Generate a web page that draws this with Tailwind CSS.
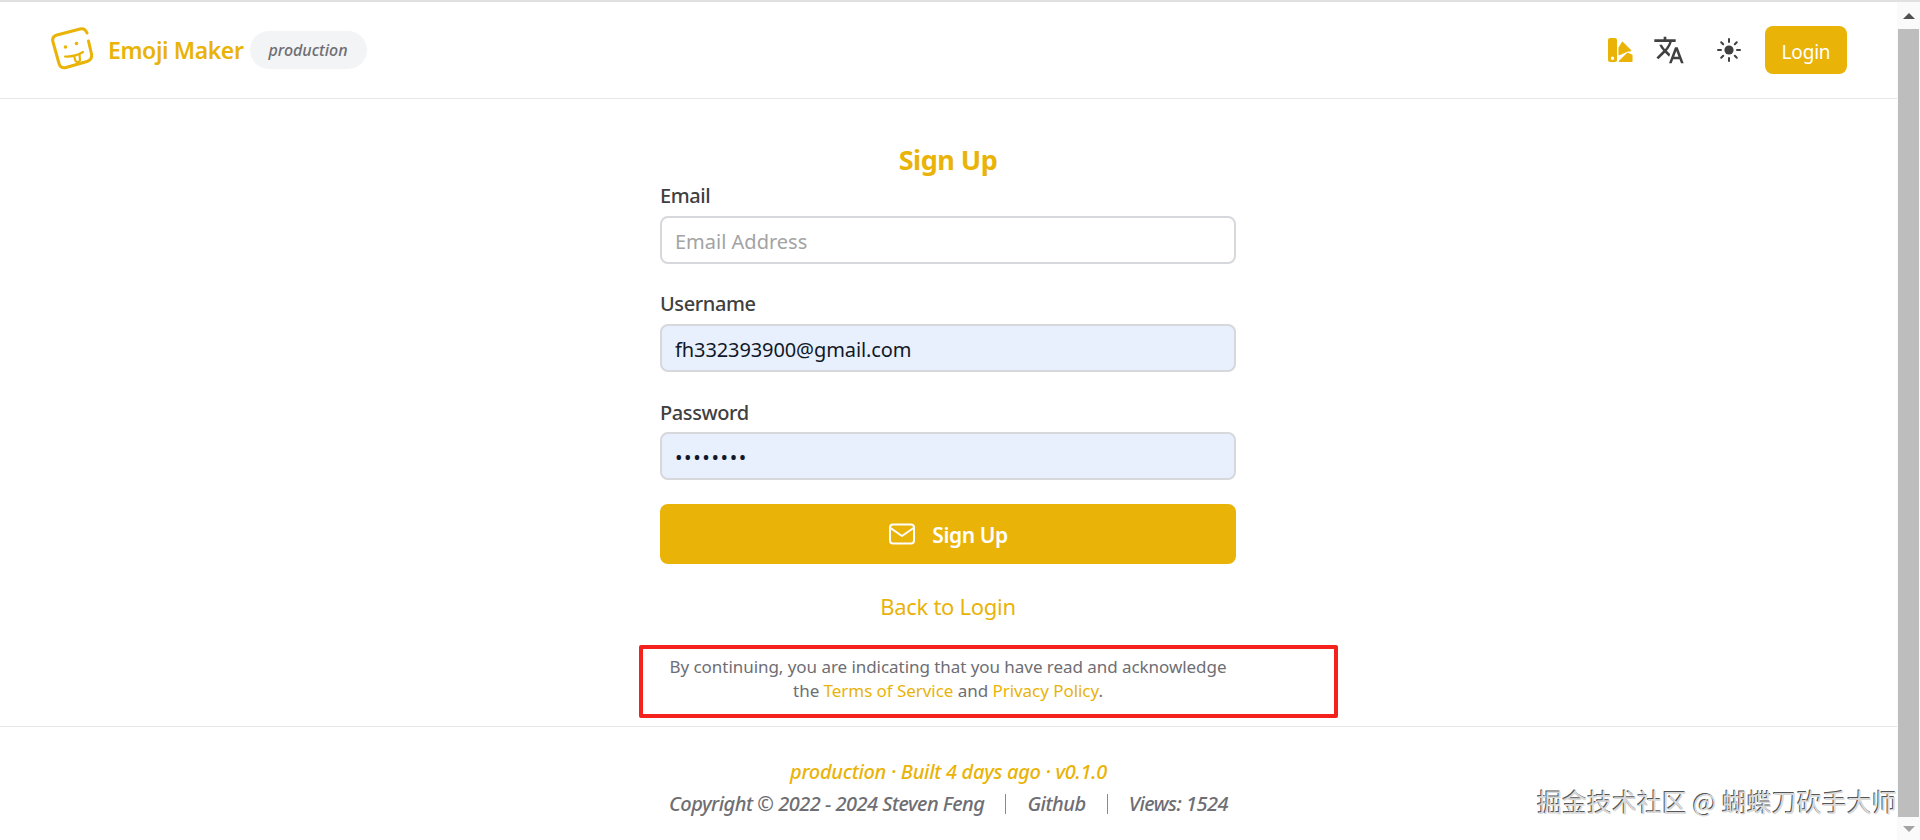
<!DOCTYPE html>
<html lang="en">
  <head>
    <meta charset="UTF-8" />
    <title>Emoji Maker</title>
    <script src="https://cdn.jsdelivr.net/npm/@tailwindcss/browser@4"></script>
  </head>
  <body class="h-[840px] overflow-hidden bg-white font-['Noto_Sans',sans-serif] text-[#404040]">
    <div class="h-[2px] bg-[#e0e0e0]"></div>
    <div class="flex h-[838px]">
      <div class="relative flex-1 min-w-0">
        <!-- header -->
        <header class="flex h-[97px] items-center justify-between border-b border-[#e5e7eb] pl-[50px] pr-[50px]">
          <div class="flex items-center">
            <svg class="h-[46px] w-[46px]" viewBox="0 0 46 46" fill="none" stroke="#e9b308" stroke-width="3" stroke-linecap="round" stroke-linejoin="round">
              <path d="M38.5 14 L41.5 27 Q42.5 33 37 34.5 L16 40.5 Q10.5 42 9 36.5 L3 15 Q1.5 9.5 7 8 L30 2 Q35 1 37 6" />
              <circle cx="15.5" cy="20" r="1.8" fill="#e9b308" stroke="none" />
              <circle cx="26.5" cy="16.5" r="1.8" fill="#e9b308" stroke="none" />
              <path d="M15 29.5 Q25 30 33 25" stroke-width="2.2" />
              <path d="M24 29 L25.5 34 Q28 36.5 30 33.5 L29.5 27.5" stroke-width="2.2" />
            </svg>
            <span class="mt-[1px] ml-[12px] text-[23px] font-semibold tracking-[-0.4px] text-[#e9b308]">Emoji Maker</span>
            <span class="ml-[6px] flex h-[38px] w-[117px] items-center justify-center rounded-full bg-[#f3f4f6] text-[16px] font-medium italic text-[#6e6e73]">production</span>
          </div>
          <div class="flex items-center">
            <svg class="h-[26px] w-[26px]" viewBox="0 0 26 26" fill="#e9b308">
              <path d="M3 1 H8 Q10 1 10 3 V23 Q10 25 8 25 H3 Q1 25 1 23 V3 Q1 1 3 1 Z M5.5 19.5 A1.7 1.7 0 1 0 5.5 22.9 A1.7 1.7 0 1 0 5.5 19.5 Z" fill-rule="evenodd" />
              <path d="M12.2 17.5 V11 L15.5 5.5 L23.5 13.5 L20 14 Z" stroke="#e9b308" stroke-width="1.5" stroke-linejoin="round" />
              <path d="M12.5 24.2 L20.5 16.5 L24.8 18.2 V24.2 Z" stroke="#e9b308" stroke-width="1.5" stroke-linejoin="round" />
            </svg>
            <svg class="ml-[20px] h-[32px] w-[32px]" viewBox="0 0 24 24" fill="#404040">
              <path d="M12.87 15.07l-2.54-2.51.03-.03c1.74-1.94 2.98-4.17 3.71-6.53H17V4h-7V2H8v2H1v1.99h11.17C11.5 7.92 10.44 9.75 9 11.35 8.07 10.32 7.3 9.19 6.69 8h-2c.73 1.63 1.73 3.17 2.98 4.56l-5.09 5.02L4 19l5-5 3.11 3.11.76-2.04zM18.5 10h-2L12 22h2l1.12-3h4.75L21 22h2l-4.5-12zm-2.62 7l1.62-4.33L19.12 17h-3.24z" />
            </svg>
            <svg class="ml-[31px] h-[26px] w-[26px]" viewBox="0 0 26 26" fill="#404040" stroke="#404040" stroke-width="2" stroke-linecap="round">
              <circle cx="13" cy="13" r="4.6" stroke="none" />
              <path d="M13 2v3M13 21v3M2 13h3M21 13h3M5.2 5.2l2 2M18.8 18.8l2 2M5.2 20.8l2-2M18.8 7.2l2-2" />
            </svg>
            <button class="ml-[23px] flex h-[48px] w-[82px] items-center justify-center rounded-lg bg-[#e9b308] pt-[4px] text-[19px] tracking-[-0.2px] text-white">Login</button>
          </div>
        </header>

        <!-- sign up form -->
        <main class="ml-[660px] flex w-[576px] flex-col">
          <h1 class="mt-[43px] text-center text-[27px] leading-[36px] font-bold tracking-[-0.5px] text-[#e9b308]">Sign Up</h1>
          <label class="mt-[4px] text-[20px] leading-[28px] font-medium tracking-[-0.4px]">Email</label>
          <input class="mt-[6px] h-[48px] rounded-lg border-2 border-[#d6d8dc] bg-white px-[13px] pt-[2px] text-[20px] text-[#111827] placeholder:text-[#a3a3a3]" type="text" placeholder="Email Address" />
          <label class="mt-[26px] text-[20px] leading-[28px] font-medium tracking-[-0.4px]">Username</label>
          <input class="mt-[6px] h-[48px] rounded-lg border-2 border-[#d6d8dc] bg-[#e8f0fe] px-[13px] pt-[2px] text-[20px] tracking-[-0.1px] text-[#111827]" type="text" value="fh332393900@gmail.com" />
          <label class="mt-[27px] text-[20px] leading-[28px] font-medium tracking-[-0.4px]">Password</label>
          <input class="mt-[5px] h-[48px] rounded-lg border-2 border-[#d6d8dc] bg-[#e8f0fe] px-[13px] pt-[2px] text-[20px] tracking-[1.6px] text-[#111827]" type="password" value="12345678" />
          <button class="mt-[24px] flex h-[60px] items-center justify-center rounded-lg bg-[#e9b308] pt-[3px] text-[21px] font-semibold tracking-[-0.4px] text-white">
            <svg class="mr-[16px] mb-[3px] h-[28px] w-[28px]" viewBox="0 0 28 28" fill="none" stroke="white" stroke-width="2" stroke-linecap="round" stroke-linejoin="round">
              <rect x="2" y="4.5" width="24" height="19" rx="3" />
              <path d="M2.5 8 L14 16 L25.5 8" />
            </svg>
            Sign Up
          </button>
          <a class="mt-[27px] text-center text-[22px] leading-[30px] tracking-[-0.3px] text-[#e9b308]" href="#">Back to Login</a>
          <p class="mt-[34px] text-center text-[17px] leading-[24px] tracking-[-0.05px] text-[#6e6e73] whitespace-nowrap">
            By continuing, you are indicating that you have read and acknowledge<br />
            the <a class="text-[#e9b308]" href="#">Terms of Service</a> and <a class="text-[#e9b308]" href="#">Privacy Policy</a>.
          </p>
        </main>

        <!-- footer -->
        <footer class="mt-[23px] border-t border-[#e5e7eb] pt-[31px] text-center text-[20px] leading-[28px] font-medium italic">
          <p class="tracking-[-0.3px] text-[#e9b308]">production · Built 4 days ago · v0.1.0</p>
          <p class="mt-[4px] flex items-center justify-center tracking-[-0.5px] text-[#6e6e73]">
            <span>Copyright © 2022 - 2024 Steven Feng</span>
            <span class="mx-[21px] h-[20px] w-px bg-[#8a8a8a]"></span>
            <span>Github</span>
            <span class="mx-[21px] h-[20px] w-px bg-[#8a8a8a]"></span>
            <span>Views: 1524</span>
          </p>
        </footer>

        <!-- annotation + watermark lying over the page -->
        <div class="absolute top-[643px] left-[639px] h-[73px] w-[699px] rounded-[2px] border-[4px] border-[#f5211c]"></div>
        <div class="absolute top-[781px] right-0 text-[25px] leading-[36px] text-[#d9d9d9] font-['Noto_Sans_CJK_SC',sans-serif] [text-shadow:-1px_-1px_0_#555,1px_1px_0_#fff]">掘金技术社区 @ 蝴蝶刀砍手大师</div>
      </div>

      <!-- scrollbar -->
      <div class="flex w-[23px] flex-col items-center bg-[#fafafa]">
        <div class="flex h-[27px] items-center justify-center">
          <div class="h-0 w-0 border-x-[6px] border-b-[6px] border-x-transparent border-b-[#505050]"></div>
        </div>
        <div class="w-[21px] flex-1 bg-[#bdbdbd]"></div>
        <div class="flex h-[23px] items-center justify-center">
          <div class="h-0 w-0 border-x-[6px] border-t-[6px] border-x-transparent border-t-[#a3a3a3]"></div>
        </div>
      </div>
    </div>
  </body>
</html>
